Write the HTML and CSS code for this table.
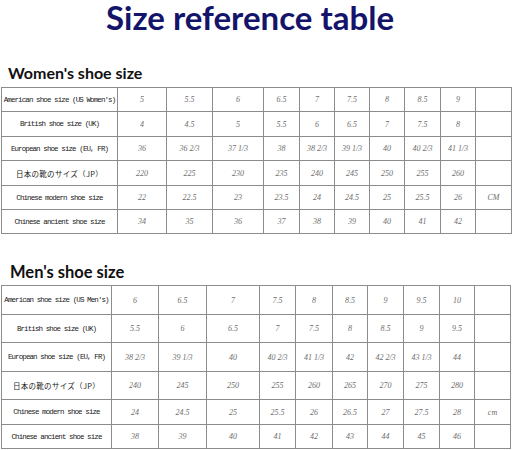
FILE: index.html
```html
<!DOCTYPE html>
<html>
<head>
<meta charset="utf-8">
<link rel="stylesheet" href="styles.css">
</head>
<body>
<h1 class="title">Size reference table</h1>

<h2 class="sec sec-women">Women's shoe size</h2>
<div class="grid grid-women">
  <div class="lab">American shoe size (US Women's)</div>
  <div class="num">5</div><div class="num">5.5</div><div class="num">6</div><div class="num">6.5</div><div class="num">7</div><div class="num">7.5</div><div class="num">8</div><div class="num">8.5</div><div class="num">9</div><div class="num"></div>
  <div class="lab">British shoe size (UK)</div>
  <div class="num">4</div><div class="num">4.5</div><div class="num">5</div><div class="num">5.5</div><div class="num">6</div><div class="num">6.5</div><div class="num">7</div><div class="num">7.5</div><div class="num">8</div><div class="num"></div>
  <div class="lab">European shoe size (EU, FR)</div>
  <div class="num">36</div><div class="num">36 2/3</div><div class="num">37 1/3</div><div class="num">38</div><div class="num">38 2/3</div><div class="num">39 1/3</div><div class="num">40</div><div class="num">40 2/3</div><div class="num">41 1/3</div><div class="num"></div>
  <div class="lab jp">日本の靴のサイズ（JP）</div>
  <div class="num">220</div><div class="num">225</div><div class="num">230</div><div class="num">235</div><div class="num">240</div><div class="num">245</div><div class="num">250</div><div class="num">255</div><div class="num">260</div><div class="num"></div>
  <div class="lab">Chinese modern shoe size</div>
  <div class="num">22</div><div class="num">22.5</div><div class="num">23</div><div class="num">23.5</div><div class="num">24</div><div class="num">24.5</div><div class="num">25</div><div class="num">25.5</div><div class="num">26</div><div class="num">CM</div>
  <div class="lab">Chinese ancient shoe size</div>
  <div class="num">34</div><div class="num">35</div><div class="num">36</div><div class="num">37</div><div class="num">38</div><div class="num">39</div><div class="num">40</div><div class="num">41</div><div class="num">42</div><div class="num"></div>
</div>

<h2 class="sec sec-men">Men's shoe size</h2>
<div class="grid grid-men">
  <div class="lab">American shoe size (US Men's)</div>
  <div class="num">6</div><div class="num">6.5</div><div class="num">7</div><div class="num">7.5</div><div class="num">8</div><div class="num">8.5</div><div class="num">9</div><div class="num">9.5</div><div class="num">10</div><div class="num"></div>
  <div class="lab">British shoe size (UK)</div>
  <div class="num">5.5</div><div class="num">6</div><div class="num">6.5</div><div class="num">7</div><div class="num">7.5</div><div class="num">8</div><div class="num">8.5</div><div class="num">9</div><div class="num">9.5</div><div class="num"></div>
  <div class="lab">European shoe size (EU, FR)</div>
  <div class="num">38 2/3</div><div class="num">39 1/3</div><div class="num">40</div><div class="num">40 2/3</div><div class="num">41 1/3</div><div class="num">42</div><div class="num">42 2/3</div><div class="num">43 1/3</div><div class="num">44</div><div class="num"></div>
  <div class="lab jp">日本の靴のサイズ（JP）</div>
  <div class="num">240</div><div class="num">245</div><div class="num">250</div><div class="num">255</div><div class="num">260</div><div class="num">265</div><div class="num">270</div><div class="num">275</div><div class="num">280</div><div class="num"></div>
  <div class="lab">Chinese modern shoe size</div>
  <div class="num">24</div><div class="num">24.5</div><div class="num">25</div><div class="num">25.5</div><div class="num">26</div><div class="num">26.5</div><div class="num">27</div><div class="num">27.5</div><div class="num">28</div><div class="num">cm</div>
  <div class="lab">Chinese ancient shoe size</div>
  <div class="num">38</div><div class="num">39</div><div class="num">40</div><div class="num">41</div><div class="num">42</div><div class="num">43</div><div class="num">44</div><div class="num">45</div><div class="num">46</div><div class="num"></div>
</div>
</body>
</html>
```

FILE: styles.css
```css
html, body {
  margin: 0;
  padding: 0;
  background: #ffffff;
}

body {
  width: 512px;
  height: 450px;
  overflow: hidden;
  font-family: "Lato", "Open Sans", sans-serif;
}

.title {
  margin: 0;
  padding: 0 12px 0 0;
  text-align: center;
  font-family: "Lato", sans-serif;
  font-weight: 700;
  font-size: 33px;
  line-height: 34px;
  color: #14146a;
}

.sec {
  margin: 0;
  font-family: "Lato", sans-serif;
  font-weight: 700;
  color: #111111;
}

.sec-women {
  font-size: 16px;
  line-height: 20px;
  margin-top: 29px;
  margin-bottom: 4px;
  padding-left: 8px;
}

.sec-men {
  font-size: 16.5px;
  line-height: 22px;
  margin-top: 27px;
  margin-bottom: 2px;
  padding-left: 10px;
}

.grid {
  display: grid;
  gap: 1px;
  padding: 1px;
  background: #8c8c8c;
  margin-left: 1px;
}

.grid-women {
  width: 509px;
  grid-template-columns: 115px 48px 45px 50px 35px 34px 34px 34px 35px 34px 35px;
  grid-template-rows: 23px 24px 23px 24px 23px 23px;
}

.grid-men {
  width: 508px;
  grid-template-columns: 109px 46px 47px 52px 35px 36px 34px 35px 35px 34px 35px;
  grid-template-rows: 28px 27px 28px 27px 24px 23px;
}

.grid > div {
  background: #ffffff;
  display: flex;
  align-items: center;
  justify-content: center;
  white-space: nowrap;
  overflow: hidden;
}

.lab {
  font-family: "Liberation Mono", monospace;
  font-size: 7.5px;
  letter-spacing: -0.9px;
  color: #222222;
}

.lab.jp {
  font-family: "Noto Sans CJK JP", sans-serif;
  font-size: 7.5px;
  letter-spacing: 0.3px;
}

.num {
  font-family: "Liberation Serif", serif;
  font-style: italic;
  font-size: 8px;
  color: #6e6e6e;
}
```
